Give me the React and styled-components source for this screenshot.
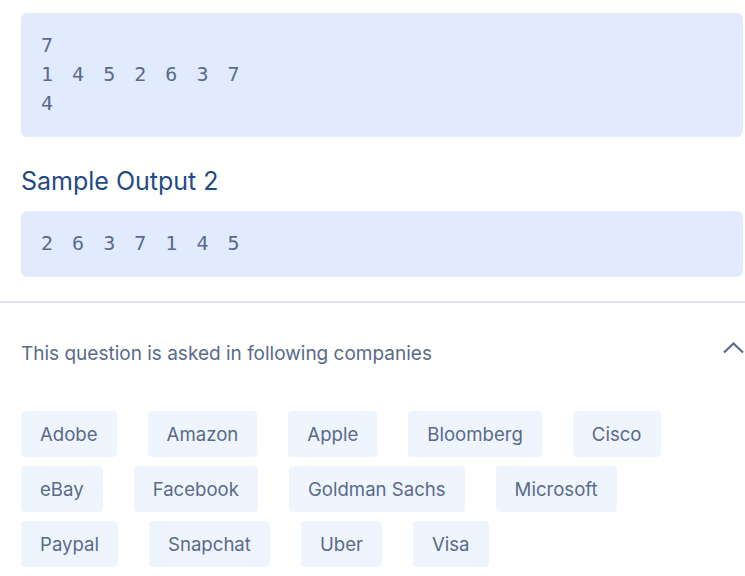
import React from 'react';
import styled, { createGlobalStyle } from 'styled-components';

const Global = createGlobalStyle`
  body {
    margin: 0;
    background: #ffffff;
    font-family: Inter, "Noto Sans", sans-serif;
    overflow: hidden;
  }
`

const Page = styled.div`
  width: 745px;
`
const Section = styled.div`
  padding: 13px 2px 0 21px;
`
const CodeBox = styled.pre`
  margin: 0;
  background: #e2ebfd;
  border-radius: 6px;
  padding: ${props => props.pad || '18px 20px'};
  font-family: "DejaVu Sans Mono", "Liberation Mono", monospace;
  font-size: 20px;
  line-height: 29px;
  letter-spacing: 3.5px;
  color: #5b6a8b;
`
const Heading = styled.h3`
  margin: 29px 0 15px;
  font-size: 25px;
  line-height: 30px;
  font-weight: 400;
  color: #1f4a86;
`
const Divider = styled.hr`
  margin: 24px 0 0;
  border: none;
  border-top: 2px solid #dfe4ef;
`
const CompanyHeader = styled.div`
  display: flex;
  align-items: center;
  justify-content: space-between;
  padding: 29px 1px 0 21px;
  height: 32px;
`
const HeaderText = styled.span`
  font-size: 19px;
  color: #5a6a8a;
  padding-top: 10px;
`
const Tags = styled.div`
  display: flex;
  flex-wrap: wrap;
  column-gap: 31px;
  row-gap: 9px;
  padding: 47px 60px 0 21px;
`
const Tag = styled.span`
  display: flex;
  align-items: center;
  height: 46px;
  padding: 0 19px;
  border-radius: 4px;
  background: #eff5fe;
  color: #5a6a8a;
  font-size: 18.6px;
`

const companies = ['Adobe', 'Amazon', 'Apple', 'Bloomberg', 'Cisco', 'eBay', 'Facebook', 'Goldman Sachs', 'Microsoft', 'Paypal', 'Snapchat', 'Uber', 'Visa'];

export default function App(){
    return(
        <Page>
            <Global />
            <Section>
                <CodeBox pad='18px 20px 19px'>{'7\n1 4 5 2 6 3 7\n4'}</CodeBox>
                <Heading>Sample Output 2</Heading>
                <CodeBox pad='18px 20px 19px'>{'2 6 3 7 1 4 5'}</CodeBox>
            </Section>
            <Divider />
            <CompanyHeader>
                <HeaderText>This question is asked in following companies</HeaderText>
                <svg width='21' height='12' viewBox='0 0 21 12' fill='none'>
                    <path d='M1 10.5 L10.5 1.5 L20 10.5' stroke='#5a6a8a' strokeWidth='2.2' />
                </svg>
            </CompanyHeader>
            <Tags>
                {companies.map(c => <Tag key={c}>{c}</Tag>)}
            </Tags>
        </Page>
    );
}
